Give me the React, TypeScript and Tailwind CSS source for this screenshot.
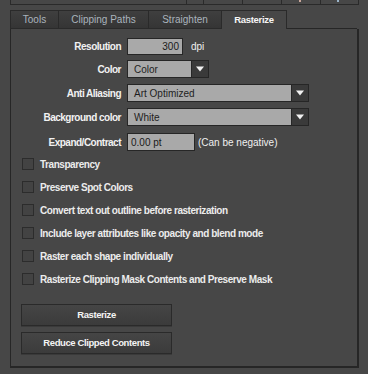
import React from 'react';

const font = { fontFamily: '"Liberation Sans", Arial, sans-serif' };

function Arrow() {
  return (
    <div className="w-[17px] h-full flex items-center justify-center bg-[#3a3a3a] border-l border-[#262626]">
      <svg width="8" height="6" viewBox="0 0 8 6">
        <path d="M0 0.5 L8 0.5 L4 5.5 Z" fill="#f2f2f2" />
      </svg>
    </div>
  );
}

function Label({ children }: { children: React.ReactNode }) {
  return (
    <div className="w-[110px] text-right text-[10px] font-bold tracking-[-0.5px] text-[#f2f2f2]">
      {children}
    </div>
  );
}

function Select({ value, width }: { value: string; width: string }) {
  return (
    <div className={`flex h-full border border-[#262626] ${width}`}>
      <div className="flex-1 bg-[#a9a9a9] pl-[6px] flex items-center text-[10px] text-[#1e1e1e]">{value}</div>
      <Arrow />
    </div>
  );
}

function Check({ label }: { label: string }) {
  return (
    <div className="flex items-center h-[12px] mb-[11px]">
      <div className="w-[12px] h-[12px] border border-[#2c2c2c] bg-[#434343] ml-[11px]" />
      <div className="ml-[6px] text-[10px] font-bold tracking-[-0.45px] text-[#ececec]">{label}</div>
    </div>
  );
}

function Button({ children }: { children: React.ReactNode }) {
  return (
    <div className="ml-[10px] w-[151px] h-[22px] flex items-center justify-center border border-[#2a2a2a] bg-gradient-to-b from-[#454545] to-[#3b3b3b] text-[9.5px] font-bold tracking-[-0.4px] text-[#f4f4f4] shadow-[0_1px_0_#3a3a3a]">
      {children}
    </div>
  );
}

export default function App() {
  return (
    <div className="w-[368px] h-[374px] bg-[#474747] overflow-hidden" style={font}>
      {/* bottom edge of the control above */}
      <div className="ml-[10px] w-[349px] h-[5px] flex border-x border-b border-[#2a2a2a]">
        <div className="w-[176px] border-r border-[#2a2a2a]" />
        <div className="w-[17px] border-r border-[#2a2a2a]" />
        <div className="w-[39px] border-r border-[#2a2a2a]" />
        <div className="w-[39px] border-r border-[#2a2a2a]" />
        <div className="w-[39px] border-r border-[#2a2a2a] relative">
          <span className="absolute left-[17px] top-0 w-[2px] h-[2px] bg-[#c9a69a]" />
        </div>
        <div className="flex-1 relative">
          <span className="absolute left-[16px] top-0 w-[2px] h-[2px] bg-[#9ab4c9]" />
        </div>
      </div>

      {/* tabs */}
      <div className="ml-[10px] mt-[5px] flex h-[19px] text-[10px]">
        <div className="w-[49px] flex items-center justify-center border border-[#2a2a2a] bg-gradient-to-b from-[#3f3f3f] to-[#353535] text-[#aab4bd]">Tools</div>
        <div className="w-[90px] flex items-center justify-center border-y border-r border-[#2a2a2a] bg-gradient-to-b from-[#3f3f3f] to-[#353535] text-[#aab4bd]">Clipping Paths</div>
        <div className="w-[73px] flex items-center justify-center border-y border-r border-[#2a2a2a] bg-gradient-to-b from-[#3f3f3f] to-[#353535] text-[#aab4bd]">Straighten</div>
        <div className="w-[65px] flex items-center justify-center border-t border-r border-[#2a2a2a] bg-[#474747] font-bold text-[9.5px] tracking-[-0.3px] text-[#f6f6f6]">Rasterize</div>
        <div className="flex-1" />
      </div>

      {/* panel */}
      <div className="ml-[10px] w-[349px] h-[339px] flex flex-col border-l border-r-2 border-b-2 border-[#262626] relative">
        <div className="absolute left-[276px] right-0 top-[-1px] h-px bg-[#262626]" />
        <div className="flex items-center h-[17px] mt-[9px]">
          <Label>Resolution</Label>
          <div className="ml-[6px] w-[56px] h-full border border-[#262626] bg-[#a9a9a9] flex items-center justify-end pr-[3px] text-[10px] text-[#1a1a1a]">300</div>
          <div className="ml-[8px] text-[10px] text-[#f0f0f0]">dpi</div>
        </div>
        <div className="flex items-center h-[18px] mt-[5px]">
          <Label>Color</Label>
          <div className="ml-[6px] h-full">
            <Select value="Color" width="w-[82px]" />
          </div>
        </div>
        <div className="flex items-center h-[18px] mt-[6px]">
          <Label>Anti Aliasing</Label>
          <div className="ml-[6px] h-full">
            <Select value="Art Optimized" width="w-[182px]" />
          </div>
        </div>
        <div className="flex items-center h-[18px] mt-[6px]">
          <Label>Background color</Label>
          <div className="ml-[6px] h-full">
            <Select value="White" width="w-[182px]" />
          </div>
        </div>
        <div className="flex items-center h-[18px] mt-[7px]">
          <Label>Expand/Contract</Label>
          <div className="ml-[6px] w-[68px] h-full border border-[#262626] bg-[#a9a9a9] flex items-center pl-[3px] text-[10px] text-[#1a1a1a]">0.00 pt</div>
          <div className="ml-[3px] text-[10px] text-[#f0f0f0]">(Can be negative)</div>
        </div>

        <div className="mt-[7px] flex flex-col">
          <Check label="Transparency" />
          <Check label="Preserve Spot Colors" />
          <Check label="Convert text out outline before rasterization" />
          <Check label="Include layer attributes like opacity and blend mode" />
          <Check label="Raster each shape individually" />
          <Check label="Rasterize Clipping Mask Contents and Preserve Mask" />
        </div>

        <div className="mt-[8px] flex flex-col gap-[6px]">
          <Button>Rasterize</Button>
          <Button>Reduce Clipped Contents</Button>
        </div>
      </div>
    </div>
  );
}
